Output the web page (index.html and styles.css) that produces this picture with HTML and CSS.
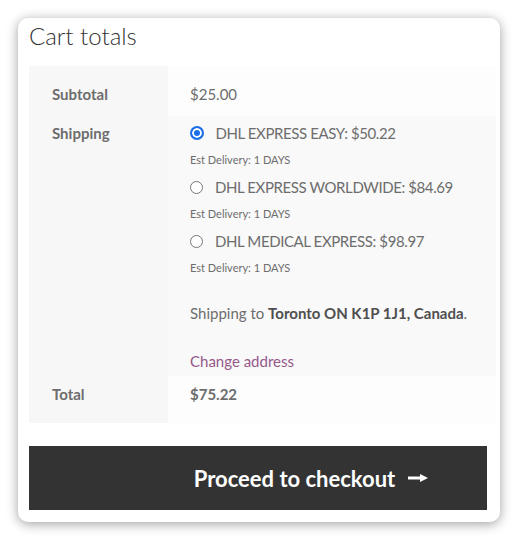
FILE: index.html
```html
<!DOCTYPE html>
<html lang="en">
<head>
<meta charset="utf-8">
<title>Cart totals</title>
<link rel="stylesheet" href="styles.css">
</head>
<body>
<div class="card">
  <h2 class="title">Cart totals</h2>
  <div class="totals">
    <div class="th row1">Subtotal</div>
    <div class="td row1">$25.00</div>

    <div class="th row2">Shipping</div>
    <div class="td row2 even">
      <ul class="methods">
        <li class="method">
          <label class="opt"><input type="radio" name="ship" checked><span>DHL EXPRESS EASY: $50.22</span></label>
          <div class="est">Est Delivery: 1 DAYS</div>
        </li>
        <li class="method">
          <label class="opt"><input type="radio" name="ship"><span>DHL EXPRESS WORLDWIDE: $84.69</span></label>
          <div class="est">Est Delivery: 1 DAYS</div>
        </li>
        <li class="method">
          <label class="opt"><input type="radio" name="ship"><span>DHL MEDICAL EXPRESS: $98.97</span></label>
          <div class="est">Est Delivery: 1 DAYS</div>
        </li>
      </ul>
      <p class="dest">Shipping to <strong>Toronto ON K1P 1J1, Canada</strong>.</p>
      <a class="change" href="#">Change address</a>
    </div>

    <div class="th row3">Total</div>
    <div class="td row3"><strong>$75.22</strong></div>
  </div>
  <a class="checkout" href="#"><span>Proceed to checkout</span><svg class="arrow" width="20" height="10" viewBox="0 0 20 10"><rect x="0" y="3.5" width="14" height="3" fill="#fff"/><polygon points="12,1 20,5 12,9" fill="#fff"/></svg></a>
</div>
</body>
</html>
```
FILE: styles.css
```css
* { box-sizing: border-box; }
html, body { margin: 0; padding: 0; background: #fff; }
body {
  padding: 18px;
  font-family: Lato, "Open Sans", sans-serif;
  color: #6d6d6d;
}
.card {
  width: 482px;
  background: #fff;
  border-radius: 10px;
  box-shadow: 0 2px 12px rgba(0, 0, 0, 0.38);
  padding: 2px 4px 12px 11px;
}
.title {
  margin: 0 0 14px;
  font-size: 24px;
  line-height: 32px;
  font-weight: 300;
  color: #333;
}
.totals {
  display: grid;
  grid-template-columns: 139px 1fr;
  font-size: 15px;
  line-height: 24px;
}
.th {
  background: #f7f7f7;
  font-weight: 700;
  padding-left: 23px;
}
.td {
  background: #fdfdfd;
  padding-left: 22px;
  padding-right: 10px;
}
.td.even { background: #f9f9f9; }
.row1 { padding-top: 16px; padding-bottom: 10px; }
.row2 { padding-top: 5px; padding-bottom: 3px; }
.row3 { padding-top: 6px; padding-bottom: 17px; }
.methods { list-style: none; margin: 0; padding: 0; }
.method { margin-bottom: 7px; }
.opt { display: flex; align-items: center; gap: 12px; height: 24px; letter-spacing: -0.4px; }
.opt input {
  appearance: none;
  -webkit-appearance: none;
  margin: 0;
  width: 13px;
  height: 13px;
  border: 1px solid #767676;
  border-radius: 50%;
  background: #fff;
  flex: none;
}
.opt input:checked {
  width: 14px;
  height: 14px;
  margin-left: -0.5px;
  border: 2px solid #1a6fe8;
  background: #1a6fe8;
  box-shadow: inset 0 0 0 2px #fff;
}
.est {
  margin-top: 7px;
  font-size: 11px;
  line-height: 16px;
}
.dest { margin: 25px 0 24px; }
.dest strong { color: #4f4f4f; }
.change { color: #96588a; text-decoration: none; display: block; }
.row3 strong { font-weight: 700; }
.checkout {
  margin-top: 23px;
  width: 458px;
  height: 64px;
  background: #333;
  color: #fff;
  text-decoration: none;
  font-weight: 700;
  font-size: 22px;
  display: flex;
  align-items: center;
  justify-content: center;
  gap: 13px;
  padding-left: 106px;
}
.arrow { flex: none; }
```
